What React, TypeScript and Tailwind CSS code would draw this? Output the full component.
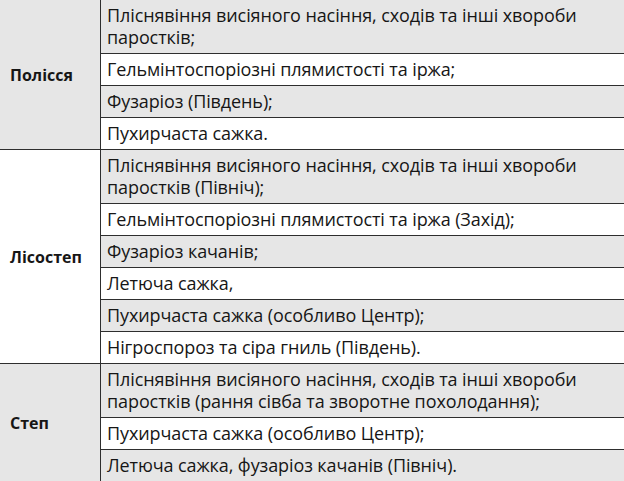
const sections = [
  {
    name: "Полісся",
    labelBg: "bg-[#e6e6e6]",
    rows: [
      ["Плісн\u044fвіння висіяного насіння, сходів та інші хвороби", "паростків;"],
      ["Гельмінтоспоріозні плямистості та іржа;"],
      ["Фузаріоз (Південь);"],
      ["Пухирчаста сажка."],
    ],
  },
  {
    name: "Лісостеп",
    labelBg: "bg-white",
    rows: [
      ["Плісн\u044fвіння висіяного насіння, сходів та інші хвороби", "паростків (Північ);"],
      ["Гельмінтоспоріозні плямистості та іржа (Захід);"],
      ["Фузаріоз качанів;"],
      ["Летюча сажка,"],
      ["Пухирчаста сажка (особливо Центр);"],
      ["Нігроспороз та сіра гниль (Південь)."],
    ],
  },
  {
    name: "Степ",
    labelBg: "bg-[#e6e6e6]",
    rows: [
      ["Плісн\u044fвіння висіяного насіння, сходів та інші хвороби", "паростків (рання сівба та зворотне похолодання);"],
      ["Пухирчаста сажка (особливо Центр);"],
      ["Летюча сажка, фузаріоз качанів (Північ)."],
    ],
  },
];

export default function App() {
  return (
    <div className="w-[624px] h-[481px] overflow-hidden bg-white font-['Open_Sans',sans-serif] leading-[22px] text-[#161616]">
      {sections.map((s) => (
        <div key={s.name} className="flex border-b border-[#2e2e2e]">
          <div className={`w-[101px] shrink-0 flex items-center pl-[10px] text-[16px] font-bold border-r border-[#2e2e2e] ${s.labelBg}`}>
            {s.name}
          </div>
          <div className="flex-1 text-[18px] tracking-[-0.1px]">
            {s.rows.map((lines, i) => (
              <div
                key={i}
                className={`pl-[6px] pr-2 pt-[4px] pb-[5px] border-b border-[#2e2e2e] last:border-b-0 ${i % 2 === 0 ? "bg-[#e6e6e6]" : "bg-white"}`}
              >
                {lines.map((l, j) => (
                  <div key={j} className="whitespace-nowrap">{l}</div>
                ))}
              </div>
            ))}
          </div>
        </div>
      ))}
    </div>
  );
}
